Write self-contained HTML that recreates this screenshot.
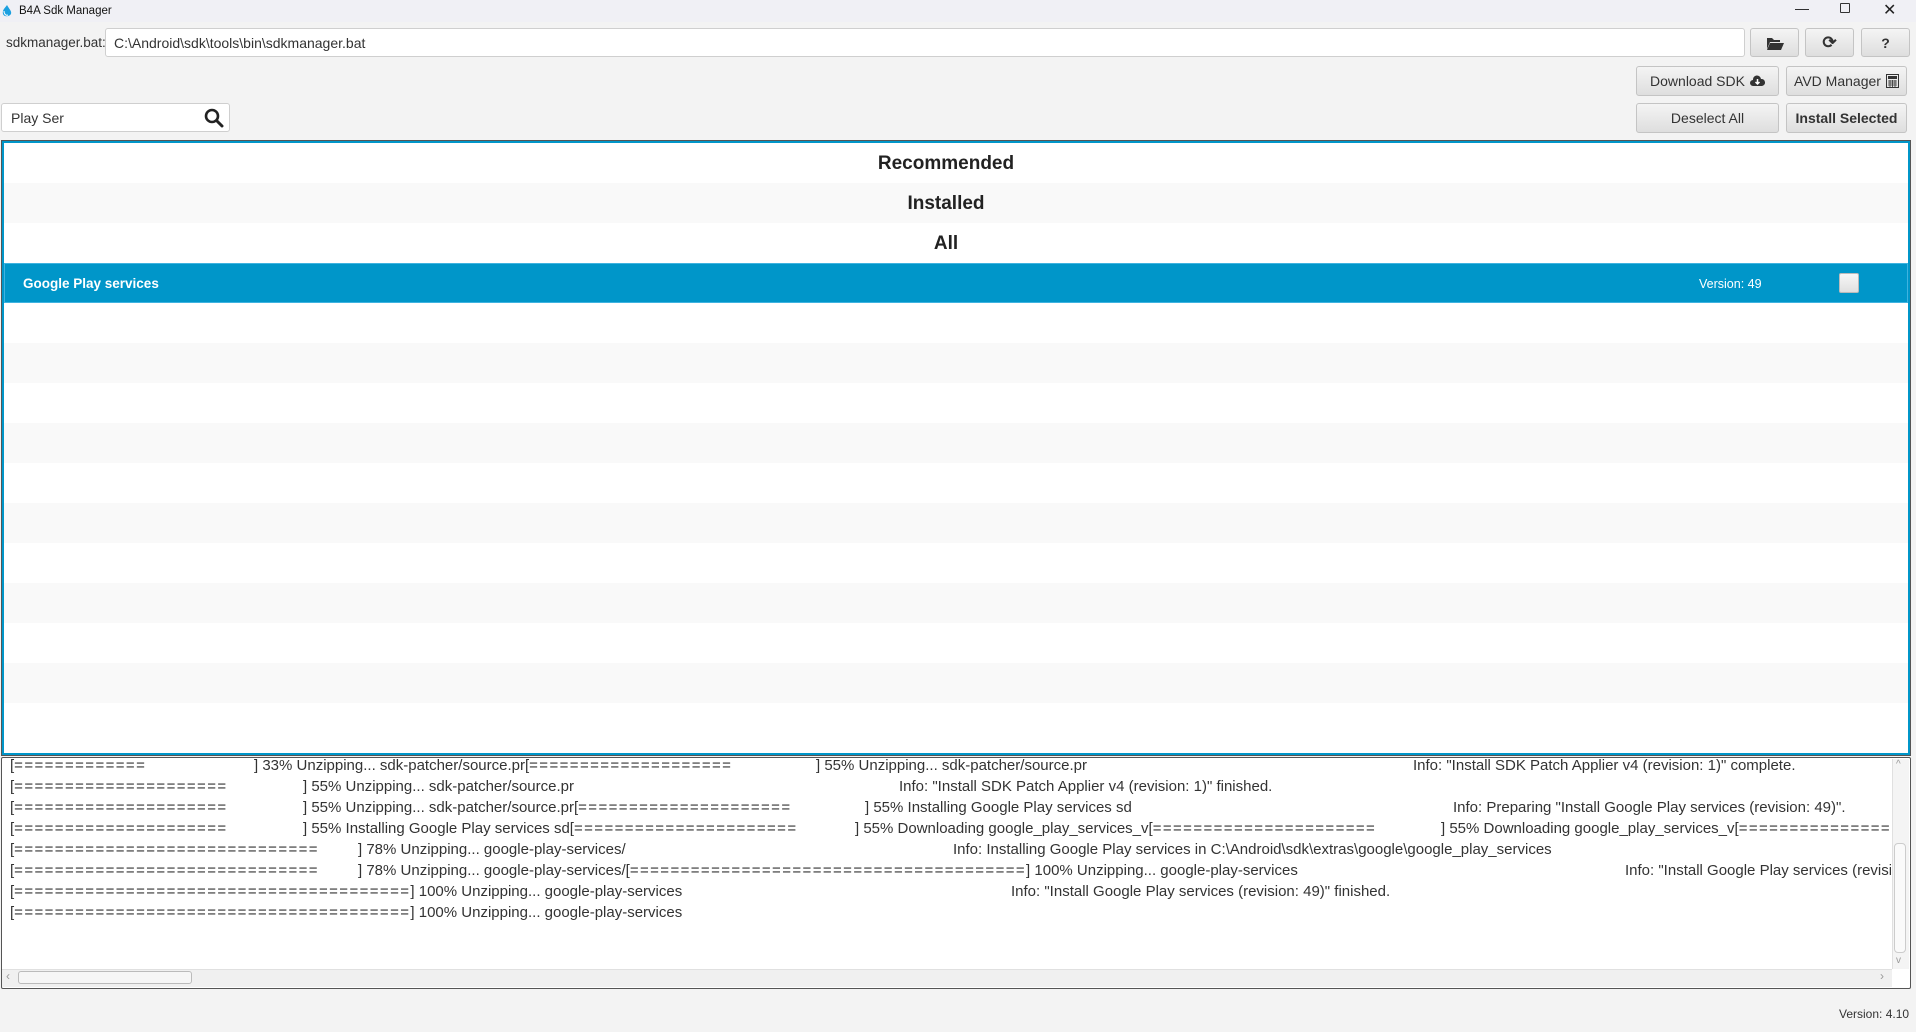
<!DOCTYPE html>
<html><head><meta charset="utf-8"><style>
*{box-sizing:border-box;margin:0;padding:0}
body{width:1916px;height:1032px;background:#f3f3f3;font-family:"Liberation Sans",sans-serif;position:relative;overflow:hidden;color:#222}
.a{position:absolute}
.btn{position:absolute;border:1px solid #c4c4c4;border-radius:3px;background:linear-gradient(#f4f4f4,#dedede);font-size:14px;color:#333;display:flex;align-items:center;justify-content:center;gap:5px}
.row{position:absolute;left:4px;width:1904px;height:40px}
.log span{position:absolute;white-space:pre;font-size:15px;color:#333;line-height:16px}
.log i{font-style:normal;letter-spacing:1.4px}
</style></head><body>
<div class="a" style="left:0;top:0;width:1916px;height:22px;background:#f0f0f5"></div>
<svg class="a" style="left:2px;top:5px" width="10" height="12" viewBox="0 0 10 12"><path d="M5 0C3 3 0 5 1 9c1 3 6 3 8 0C10 6 7 4 5 0z" fill="#1ba0e0"/><path d="M2 6c0 3 2 5 4 4" stroke="#fff" fill="none"/></svg>
<div class="a" style="left:19px;top:5px;font-size:11.5px;color:#111">B4A Sdk Manager</div>
<div class="a" style="left:1795px;top:0;font-size:14px;color:#222">—</div>
<div class="a" style="left:1840px;top:3px;width:10px;height:10px;border:1px solid #333;border-radius:1px"></div>
<div class="a" style="left:1883px;top:0;font-size:16px;color:#222">✕</div>

<div class="a" style="left:6px;top:35px;font-size:13.5px;color:#333">sdkmanager.bat:</div>
<div class="a" style="left:105px;top:28px;width:1640px;height:29px;background:#fff;border:1px solid #cfcfcf;border-radius:3px;font-size:14px;padding:6px 8px;color:#333">C:\Android\sdk\tools\bin\sdkmanager.bat</div>
<div class="btn" style="left:1750px;top:28px;width:49px;height:29px"><svg width="18" height="14" viewBox="0 0 18 14"><path d="M1 2h5l2 2h6v2H4L1 13z" fill="#333"/><path d="M4 7h14l-3 7H1z" fill="#333"/></svg></div>
<div class="btn" style="left:1805px;top:28px;width:49px;height:29px;font-size:17px;font-weight:bold">⟳</div>
<div class="btn" style="left:1861px;top:28px;width:49px;height:29px;font-weight:bold">?</div>

<div class="btn" style="left:1636px;top:66px;width:143px;height:30px">Download SDK <svg width="15" height="12" viewBox="0 0 15 12"><path d="M3 11a3 3 0 0 1 0-6 4 4 0 0 1 8-1 3.5 3.5 0 0 1 1 7z" fill="#333"/><path d="M7.5 4v5M5.5 7l2 2 2-2" stroke="#fff" stroke-width="1.5" fill="none"/></svg></div>
<div class="btn" style="left:1786px;top:66px;width:121px;height:30px">AVD Manager <svg width="13" height="14" viewBox="0 0 13 14"><rect x=".5" y=".5" width="12" height="13" fill="none" stroke="#333"/><rect x="2" y="2" width="9" height="3" fill="#333"/><path d="M2 7h9M2 9h9M2 11h9M4 6v7M6.5 6v7M9 6v7" stroke="#333" stroke-width=".8"/></svg></div>
<div class="btn" style="left:1636px;top:103px;width:143px;height:30px">Deselect All</div>
<div class="btn" style="left:1786px;top:103px;width:121px;height:30px;font-weight:bold">Install Selected</div>

<div class="a" style="left:1px;top:103px;width:229px;height:29px;background:#fff;border:1px solid #cfcfcf;border-radius:3px;font-size:14px;padding:6px 9px;color:#333">Play Ser</div>
<svg class="a" style="left:204px;top:108px" width="20" height="20" viewBox="0 0 20 20"><circle cx="8" cy="8" r="6" stroke="#222" stroke-width="2.6" fill="none"/><path d="M12.5 12.5L18 18" stroke="#222" stroke-width="3" stroke-linecap="round"/></svg>

<div class="a" style="left:2px;top:141px;width:1908px;height:614px;background:#fff;border:2px solid #0096c9;outline:1px solid #555"></div>
<div class="row" style="top:143px;background:#fff"></div>
<div class="row" style="top:183px;background:#f9f9f9"></div>
<div class="row" style="top:223px;background:#fff"></div>
<div class="a" style="left:0;width:1892px;top:153px;text-align:center;font-size:19px;font-weight:bold">Recommended</div>
<div class="a" style="left:0;width:1892px;top:193px;text-align:center;font-size:19px;font-weight:bold">Installed</div>
<div class="a" style="left:0;width:1892px;top:233px;text-align:center;font-size:19px;font-weight:bold">All</div>
<div class="row" style="top:263px;background:#0096c9;border:1px solid #3fb3e0"></div>
<div class="a" style="left:23px;top:276px;font-size:13.5px;font-weight:bold;color:#fff">Google Play services</div>
<div class="a" style="left:1699px;top:277px;font-size:12.5px;color:#fff">Version: 49</div>
<div class="a" style="left:1839px;top:273px;width:20px;height:20px;border-radius:2px;background:linear-gradient(#f7f7f7,#e0e0e0);border:1px solid #bbb"></div>
<div class="row" style="top:343px;background:#f9f9f9"></div>
<div class="row" style="top:423px;background:#f9f9f9"></div>
<div class="row" style="top:503px;background:#f9f9f9"></div>
<div class="row" style="top:583px;background:#f9f9f9"></div>
<div class="row" style="top:663px;background:#f9f9f9"></div>

<div class="a" style="left:1px;top:757px;width:1910px;height:232px;background:#fff;border:1px solid #555;border-radius:2px"></div>
<div class="a log" style="left:2px;top:759px;width:1889px;height:209px;overflow:hidden">
<span style="left:8px;top:-1px">[<i>=============</i></span><span style="left:252px;top:-1px">] 33% Unzipping... sdk-patcher/source.pr[<i>====================</i></span><span style="left:814px;top:-1px">] 55% Unzipping... sdk-patcher/source.pr</span><span style="left:1411px;top:-1px">Info: "Install SDK Patch Applier v4 (revision: 1)" complete.</span>
<span style="left:8px;top:20px">[<i>=====================</i></span><span style="left:301px;top:20px">] 55% Unzipping... sdk-patcher/source.pr</span><span style="left:897px;top:20px">Info: "Install SDK Patch Applier v4 (revision: 1)" finished.</span>
<span style="left:8px;top:41px">[<i>=====================</i></span><span style="left:301px;top:41px">] 55% Unzipping... sdk-patcher/source.pr[<i>=====================</i></span><span style="left:863px;top:41px">] 55% Installing Google Play services sd</span><span style="left:1451px;top:41px">Info: Preparing "Install Google Play services (revision: 49)".</span>
<span style="left:8px;top:62px">[<i>=====================</i></span><span style="left:301px;top:62px">] 55% Installing Google Play services sd[<i>======================</i></span><span style="left:853px;top:62px">] 55% Downloading google_play_services_v[<i>======================</i></span><span style="left:1439px;top:62px">] 55% Downloading google_play_services_v[<i>================</i></span>
<span style="left:8px;top:83px">[<i>==============================</i></span><span style="left:356px;top:83px">] 78% Unzipping... google-play-services/</span><span style="left:951px;top:83px">Info: Installing Google Play services in C:\Android\sdk\extras\google\google_play_services</span>
<span style="left:8px;top:104px">[<i>==============================</i></span><span style="left:356px;top:104px">] 78% Unzipping... google-play-services/[<i>=======================================</i>] 100% Unzipping... google-play-services</span><span style="left:1623px;top:104px">Info: "Install Google Play services (revision: 49)" complete.</span>
<span style="left:8px;top:125px">[<i>=======================================</i>] 100% Unzipping... google-play-services</span><span style="left:1009px;top:125px">Info: "Install Google Play services (revision: 49)" finished.</span>
<span style="left:8px;top:146px">[<i>=======================================</i>] 100% Unzipping... google-play-services</span>
</div>
<div class="a" style="left:1892px;top:759px;width:17px;height:210px;background:#f4f4f4;border-left:1px solid #e0e0e0"></div>
<div class="a" style="left:1894px;top:843px;width:12px;height:110px;background:#fafafa;border:1px solid #ccc;border-radius:4px"></div>
<div class="a" style="left:1896px;top:759px;font-size:10px;color:#999">^</div>
<div class="a" style="left:1896px;top:955px;font-size:10px;color:#999">v</div>
<div class="a" style="left:2px;top:969px;width:1890px;height:18px;background:#f0f0f0;border-top:1px solid #e0e0e0"></div>
<div class="a" style="left:18px;top:971px;width:174px;height:13px;background:#f6f6f6;border:1px solid #bbb;border-radius:3px"></div>
<div class="a" style="left:6px;top:969px;font-size:12px;color:#999">‹</div>
<div class="a" style="left:1880px;top:969px;font-size:12px;color:#999">›</div>

<div class="a" style="left:1839px;top:1007px;font-size:12px;color:#333">Version: 4.10</div>
</body></html>
